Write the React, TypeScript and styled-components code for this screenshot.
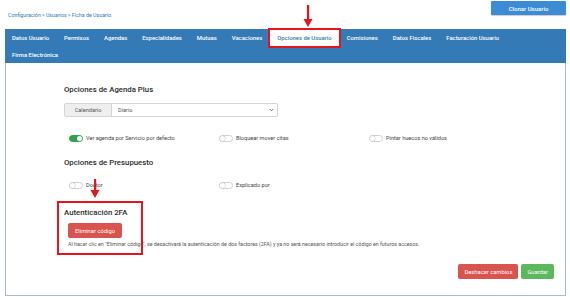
import styled, { createGlobalStyle } from "styled-components";

const GlobalStyle = createGlobalStyle`
    html, body {
        margin: 0;
        padding: 0;
        background: #ffffff;
        font-family: Roboto, "Liberation Sans", Arial, sans-serif;
    }
    * {
        box-sizing: border-box;
    }
`;

const Page = styled.div`
    width: 570px;
    height: 297px;
    position: relative;
    overflow: hidden;
`;

const TopBar = styled.div`
    height: 29px;
    display: flex;
    justify-content: space-between;
    align-items: flex-start;
    padding: 0 4px 0 8px;
`;

const Breadcrumb = styled.div`
    margin-top: 12px;
    font-size: 5.3px;
    line-height: 7px;
    color: #337ab7;
`;

const BlueButton = styled.button`
    margin-top: 1px;
    width: 75px;
    height: 14px;
    border: none;
    border-radius: 1px;
    background: #3b8cd5;
    color: #ffffff;
    font-family: inherit;
    font-size: 6px;
    font-weight: 500;
    padding: 0;
    box-shadow: 0 1px 1px rgba(0, 0, 0, 0.2);
`;

const Panel = styled.div`
    margin: 0 4px 0 5px;
    height: 267px;
    border: 1px solid #a6bcd4;
    border-top: none;
    display: flex;
    flex-direction: column;
`;

const TabBar = styled.div`
    background: #337ab7;
    display: flex;
    flex-wrap: wrap;
    padding: 1px 0 0 0;
    height: 34px;
    margin: 0 -1px;
`;

const Tab = styled.div<{ $active?: boolean }>`
    height: 16px;
    padding: 0 7px;
    display: flex;
    align-items: center;
    font-size: 5.9px;
    font-weight: 500;
    white-space: nowrap;
    color: ${(p) => (p.$active ? "#337ab7" : "#ffffff")};
    background: ${(p) => (p.$active ? "#ffffff" : "transparent")};
    outline: ${(p) => (p.$active ? "2px solid #e8141c" : "none")};
    margin-right: 1px;
`;

const Content = styled.div`
    flex: 1;
    padding: 21px 11px 16px 58px;
    display: flex;
    flex-direction: column;
`;

const Heading = styled.div<{ $gap: number }>`
    margin-top: ${(p) => p.$gap}px;
    font-size: 7.8px;
    line-height: 12px;
    font-weight: 500;
    color: #2b2b2b;
`;

const InputGroup = styled.div`
    margin-top: 7px;
    width: 214px;
    height: 14px;
    display: flex;
    border: 1px solid #d4d4d4;
    border-radius: 2px;
    font-size: 5.6px;
    color: #555555;
`;

const Addon = styled.div`
    width: 47px;
    background: #eeeeee;
    border-right: 1px solid #d4d4d4;
    display: flex;
    align-items: center;
    justify-content: center;
`;

const SelectBox = styled.div`
    flex: 1;
    display: flex;
    align-items: center;
    justify-content: space-between;
    padding: 0 3px 0 6px;
`;

const ToggleRow = styled.div<{ $gap: number }>`
    margin-top: ${(p) => p.$gap}px;
    height: 10px;
    display: grid;
    grid-template-columns: repeat(3, 150px);
    padding-left: 5px;
`;

const ToggleItem = styled.div`
    display: flex;
    align-items: center;
    gap: 3px;
    font-size: 5.6px;
    color: #444444;
    white-space: nowrap;
`;

const Switch = styled.span<{ $on?: boolean }>`
    position: relative;
    width: 14px;
    height: 7px;
    border-radius: 4px;
    background: ${(p) => (p.$on ? "#2ea44f" : "#ffffff")};
    border: 1px solid ${(p) => (p.$on ? "#2ea44f" : "#d0d0d0")};
    &::after {
        content: "";
        position: absolute;
        top: 0;
        left: ${(p) => (p.$on ? "7px" : "0")};
        width: 5px;
        height: 5px;
        border-radius: 50%;
        background: #ffffff;
        box-shadow: ${(p) => (p.$on ? "none" : "0 0 0 0.5px #c4c4c4")};
    }
`;

const TwoFA = styled.div`
    position: relative;
    display: flex;
    flex-direction: column;
`;

const RedButton = styled.button<{ $green?: boolean }>`
    height: 15px;
    border: none;
    border-radius: 2px;
    background: ${(p) => (p.$green ? "#5cb85c" : "#d9534f")};
    color: #ffffff;
    font-family: inherit;
    font-size: 5.8px;
    padding: 0 6px;
`;

const DeleteButton = styled(RedButton)`
    margin-top: 4px;
    margin-left: 4px;
    width: 54px;
    padding: 0;
`;

const Note = styled.div`
    margin-top: 2px;
    margin-left: 4px;
    font-size: 5.3px;
    line-height: 8px;
    color: #555555;
    white-space: nowrap;
`;

const Actions = styled.div`
    margin-top: auto;
    display: flex;
    justify-content: flex-end;
    gap: 3px;
`;

const MarkBox = styled.div`
    position: absolute;
    left: -7px;
    top: 11px;
    width: 86px;
    height: 54px;
    border: 2px solid #e8141c;
    pointer-events: none;
`;

const Arrow = styled.svg<{ $x: number; $y: number }>`
    position: absolute;
    left: ${(p) => p.$x}px;
    top: ${(p) => p.$y}px;
`;

function RedArrow({ x, y, h }: { x: number; y: number; h: number }) {
    return (
        <Arrow $x={x} $y={y} width="10" height={h} viewBox={`0 0 10 ${h}`}>
            <rect x="4" y="0" width="2.2" height={h - 7} fill="#e8141c" />
            <polygon points={`0.5,${h - 8} 9.5,${h - 8} 5,${h}`} fill="#e8141c" />
        </Arrow>
    );
}

const tabs = [
    "Datos Usuario",
    "Permisos",
    "Agendas",
    "Especialidades",
    "Mutuas",
    "Vacaciones",
    "Opciones de Usuario",
    "Comisiones",
    "Datos Fiscales",
    "Facturación Usuario",
    "Firma Electrónica",
];

function App() {
    return (
        <Page>
            <GlobalStyle />
            <TopBar>
                <Breadcrumb>Configuración » Usuarios » Ficha de Usuario:</Breadcrumb>
                <BlueButton>Clonar Usuario</BlueButton>
            </TopBar>
            <Panel>
                <TabBar>
                    {tabs.map((t) => (
                        <Tab key={t} $active={t === "Opciones de Usuario"}>
                            {t}
                        </Tab>
                    ))}
                </TabBar>
                <Content>
                    <Heading $gap={0}>Opciones de Agenda Plus</Heading>
                    <InputGroup>
                        <Addon>Calendario</Addon>
                        <SelectBox>
                            Diario
                            <svg width="5" height="4" viewBox="0 0 5 4">
                                <path d="M0.8 1 L2.5 2.8 L4.2 1" stroke="#555" strokeWidth="0.8" fill="none" />
                            </svg>
                        </SelectBox>
                    </InputGroup>
                    <ToggleRow $gap={16}>
                        <ToggleItem>
                            <Switch $on />
                            Ver agenda por Servicio por defecto
                        </ToggleItem>
                        <ToggleItem>
                            <Switch />
                            Bloquear mover citas
                        </ToggleItem>
                        <ToggleItem>
                            <Switch />
                            Pintar huecos no válidos
                        </ToggleItem>
                    </ToggleRow>
                    <Heading $gap={14}>Opciones de Presupuesto</Heading>
                    <ToggleRow $gap={11}>
                        <ToggleItem>
                            <Switch />
                            Doctor
                        </ToggleItem>
                        <ToggleItem>
                            <Switch />
                            Explicado por
                        </ToggleItem>
                    </ToggleRow>
                    <TwoFA>
                        <Heading $gap={17}>Autenticación 2FA</Heading>
                        <DeleteButton>Eliminar código</DeleteButton>
                        <Note>
                            Al hacer clic en "Eliminar código", se desactivará la autenticación de dos factores (2FA) y ya no
                            será necesario introducir el código en futuros accesos.
                        </Note>
                        <MarkBox />
                    </TwoFA>
                    <Actions>
                        <RedButton>Deshacer cambios</RedButton>
                        <RedButton $green>Guardar</RedButton>
                    </Actions>
                </Content>
            </Panel>
            <RedArrow x={303} y={5} h={22} />
            <RedArrow x={90} y={179} h={19} />
        </Page>
    );
}

export default App;
